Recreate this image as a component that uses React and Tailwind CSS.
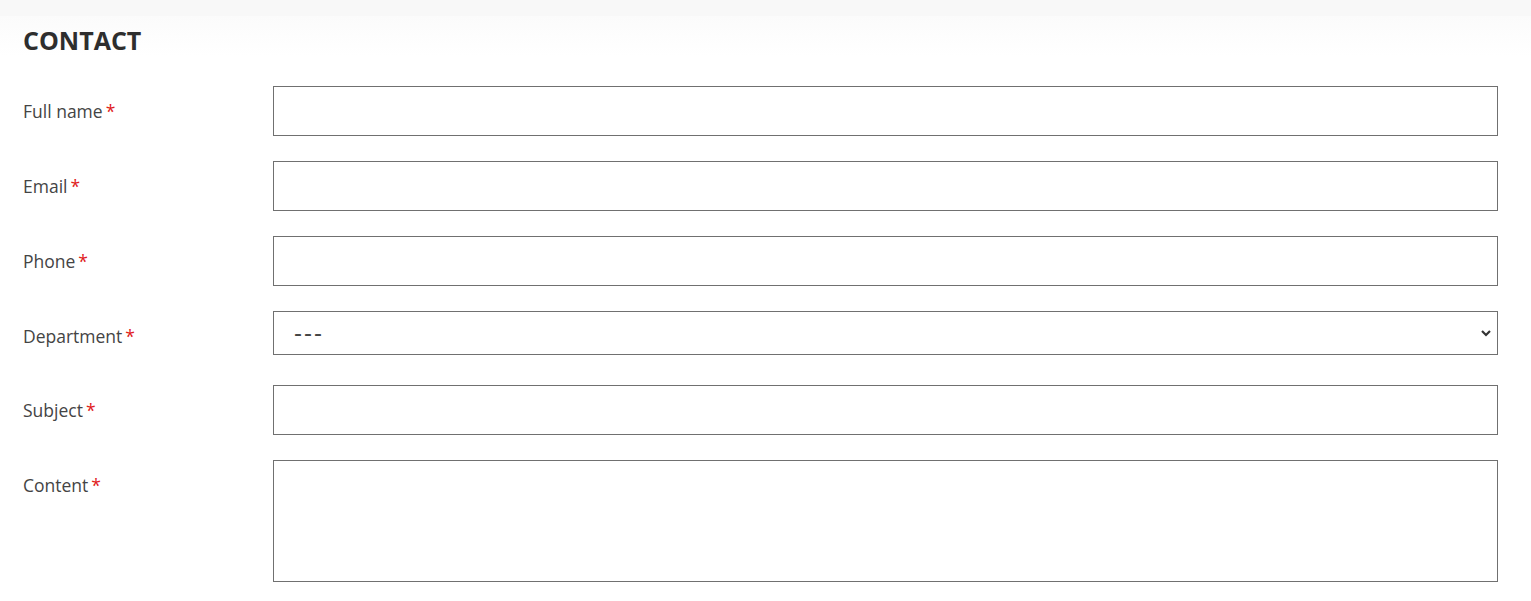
const FIELDS = [
  { label: "Full name", type: "input" },
  { label: "Email", type: "input" },
  { label: "Phone", type: "input" },
  { label: "Department", type: "select" },
  { label: "Subject", type: "input" },
  { label: "Content", type: "textarea" },
]

const Label = ({ text }) => (
  <label className="w-[250px] shrink-0 pt-[13px] text-[17.5px] leading-[24px] text-[#444]">
    {text}
    <span className="ml-[3px] text-[#e0201b]">*</span>
  </label>
)

export default function App() {
  return (
    <div className="min-h-screen bg-white font-['Open_Sans',sans-serif]">
      <div className="h-[16px] bg-[#f8f8f8]" />
      <div className="bg-gradient-to-b from-[#fbfbfb] to-white pl-[23px] pr-[33px]">
        <h2 className="pt-[8px] text-[25px] font-bold leading-[32px] text-[#2e2e2e]">CONTACT</h2>
      </div>
      <form className="pl-[23px] pr-[33px] pt-[30px]">
        {FIELDS.map((f) => (
          <div
            key={f.label}
            className={`flex items-start ${f.type === "select" ? "mb-[30px]" : "mb-[25px]"}`}
          >
            <Label text={f.label} />
            {f.type === "input" && (
              <input type="text" className="h-[50px] flex-1 border border-[#707070] bg-white px-[20px] outline-none" />
            )}
            {f.type === "select" && (
              <div className="relative flex-1">
                <select className="h-[44px] w-full appearance-none border border-[#707070] bg-white pl-[20px] font-['Liberation_Sans',sans-serif] text-[24px] tracking-[2px] text-[#444] outline-none">
                  <option>---</option>
                </select>
                <svg
                  className="pointer-events-none absolute right-[6px] top-[16px]"
                  width="12"
                  height="12"
                  viewBox="0 0 12 12"
                  fill="none"
                  stroke="#333"
                  strokeWidth="2.2"
                >
                  <path d="M2 4l4 4 4-4" />
                </svg>
              </div>
            )}
            {f.type === "textarea" && (
              <textarea className="h-[122px] flex-1 resize-none border border-[#707070] bg-white px-[20px] outline-none" />
            )}
          </div>
        ))}
      </form>
    </div>
  )
}
